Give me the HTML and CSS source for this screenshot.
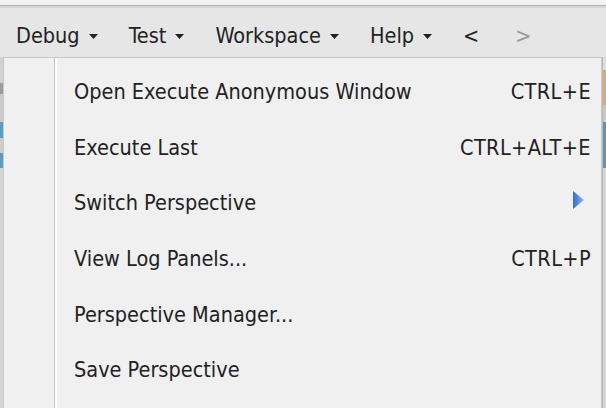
FILE: index.html
```html
<!DOCTYPE html>
<html>
<head>
<meta charset="utf-8">
<link rel="stylesheet" href="styles.css">
</head>
<body>
<div class="top-strip"></div>
<div class="menubar">
  <span class="mb-item">Debug<svg class="caret" width="9" height="5" viewBox="0 0 9 5"><polygon points="0,0 9,0 4.5,5" fill="#222"/></svg></span>
  <span class="mb-item">Test<svg class="caret" width="9" height="5" viewBox="0 0 9 5"><polygon points="0,0 9,0 4.5,5" fill="#222"/></svg></span>
  <span class="mb-item">Workspace<svg class="caret" width="9" height="5" viewBox="0 0 9 5"><polygon points="0,0 9,0 4.5,5" fill="#222"/></svg></span>
  <span class="mb-item">Help<svg class="caret" width="9" height="5" viewBox="0 0 9 5"><polygon points="0,0 9,0 4.5,5" fill="#222"/></svg></span>
  <span class="mb-nav">&lt;</span>
  <span class="mb-nav disabled">&gt;</span>
</div>
<div class="workspace">
  <div class="bg-left">
    <div class="bl-a"></div>
    <div class="bl-b"></div>
    <div class="bl-c"></div>
    <div class="bl-blue1"></div>
    <div class="bl-d"></div>
    <div class="bl-blue2"></div>
    <div class="bl-rest"></div>
  </div>
  <div class="bg-mid"></div>
  <div class="bg-right">
    <div class="br-a"></div>
    <div class="br-orange"></div>
    <div class="br-c"></div>
    <div class="br-blue"></div>
    <div class="br-rest"></div>
  </div>
  <div class="popup">
    <div class="row"><span class="label">Open Execute Anonymous Window</span><span class="key">CTRL+E</span></div>
    <div class="row"><span class="label">Execute Last</span><span class="key">CTRL+ALT+E</span></div>
    <div class="row"><span class="label">Switch Perspective</span><span class="key"><svg class="sub" width="11" height="18" viewBox="0 0 11 18"><defs><linearGradient id="g" x1="0" y1="0" x2="1" y2="0"><stop offset="0" stop-color="#2c6ad4"/><stop offset="1" stop-color="#93b8ee"/></linearGradient></defs><polygon points="0,0 11,9 0,18" fill="url(#g)"/></svg></span></div>
    <div class="row"><span class="label">View Log Panels...</span><span class="key">CTRL+P</span></div>
    <div class="row"><span class="label">Perspective Manager...</span><span class="key"></span></div>
    <div class="row"><span class="label">Save Perspective</span><span class="key"></span></div>
  </div>
</div>
</body>
</html>
```
FILE: styles.css
```css
html, body {
  margin: 0;
  padding: 0;
  width: 606px;
  height: 408px;
  overflow: hidden;
  background: #f0f0f0;
  font-family: "DejaVu Sans Condensed", "DejaVu Sans", sans-serif;
  color: #222;
}
.top-strip {
  height: 5px;
  background: #f2f2f4;
  border-bottom: 1px solid #b0b0b0;
}
.menubar {
  height: 51px;
  background: #e6e6e6;
  border-top: 2px solid #d6d6d6;
  display: flex;
  align-items: center;
  gap: 31px;
  padding-left: 16px;
  padding-top: 6px;
  font-size: 21.5px;
  box-sizing: border-box;
}
.mb-item {
  white-space: nowrap;
  display: flex;
  align-items: center;
}
.caret {
  margin-left: 9px;
  margin-top: 1px;
}
.mb-nav.disabled {
  color: #9a9a9a;
  margin-left: 5px;
}
.workspace {
  position: relative;
  height: 351px;
  display: flex;
}
.bg-left {
  width: 4px;
  display: flex;
  flex-direction: column;
}
.bl-a { height: 26px; background: #d2d2d2; }
.bl-b { height: 11px; background: #9c9c9c; }
.bl-c { height: 28px; background: #cbcbcb; }
.bl-blue1 { height: 16px; background: #5a9bc0; }
.bl-d { height: 15px; background: #cdcdcd; }
.bl-blue2 { height: 15px; background: #5a9bc0; }
.bl-rest { flex: 1; background: #d4d4d4; }
.bg-mid { flex: 1; }
.bg-right {
  width: 6px;
  display: flex;
  flex-direction: column;
}
.br-a { height: 13px; background: #dcdcdc; }
.br-orange { height: 35px; background: #e0a868; }
.br-c { height: 17px; background: #c8c8c8; }
.br-blue { height: 46px; background: #5b98bd; }
.br-rest { flex: 1; background: #d6d6d6; }
.popup {
  position: absolute;
  left: 3px;
  top: 0;
  width: 599px;
  height: 360px;
  box-sizing: border-box;
  background: #f0f0f0;
  border: 1px solid #c9c9c9;
  box-shadow: 1px 0 0 #b8b8b8;
  padding-top: 6px;
  background-image: linear-gradient(to right, transparent 50px, #c4c4c4 50px, #c4c4c4 51px, #ffffff 51px, #ffffff 53px, transparent 53px);
}
.row {
  height: 55.6px;
  display: flex;
  align-items: center;
  justify-content: space-between;
  padding-left: 70px;
  padding-right: 10px;
  font-size: 21.5px;
}
.key {
  display: flex;
  align-items: center;
  letter-spacing: 0.4px;
}
.sub {
  margin-right: 7px;
  margin-top: -5px;
}
```
